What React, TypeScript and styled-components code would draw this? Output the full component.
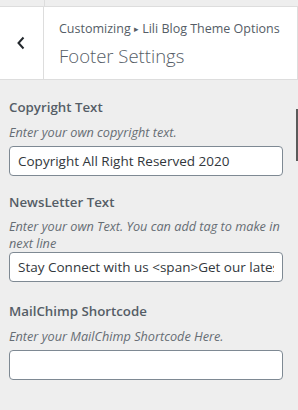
import React from "react";
import styled, { createGlobalStyle } from "styled-components";

const GlobalStyle = createGlobalStyle`
  html, body {
    margin: 0;
    padding: 0;
    background: #eeeeee;
  }
  body {
    font-family: "Open Sans", "Noto Sans", sans-serif;
    color: #555d66;
    overflow: hidden;
  }
`;

interface FieldData {
  label: string;
  description: string;
  value: string;
  top: number; // space above the field
  descTop: number; // space between label and description
  inputTop: number; // space between description and input
}

const fields: FieldData[] = [
  {
    label: "Copyright Text",
    description: "Enter your own copyright text.",
    value: "Copyright All Right Reserved 2020",
    top: 0,
    descTop: 7,
    inputTop: 5,
  },
  {
    label: "NewsLetter Text",
    description: "Enter your own Text. You can add tag to make in next line",
    value: "Stay Connect with us <span>Get our latest news</span>",
    top: 16,
    descTop: 6,
    inputTop: 0,
  },
  {
    label: "MailChimp Shortcode",
    description: "Enter your MailChimp Shortcode Here.",
    value: "",
    top: 19,
    descTop: 7,
    inputTop: 5,
  },
];

const Field = ({ label, description, value, top, descTop, inputTop }: FieldData) => (
  <FieldWrap $top={top}>
    <Label>{label}</Label>
    <Description $top={descTop} $bottom={inputTop}>
      {description}
    </Description>
    <Input type="text" defaultValue={value} />
  </FieldWrap>
);

const App = () => {
  return (
    <Panel>
      <GlobalStyle />
      <TopStrip>
        <StripCell />
      </TopStrip>
      <Header>
        <BackButton>
          <svg width="10" height="14" viewBox="0 0 10 14">
            <path d="M7.5 1.5 L2.5 7 L7.5 12.5" fill="none" stroke="#23282d" strokeWidth="2" />
          </svg>
        </BackButton>
        <Titles>
          <Crumb>
            Customizing <Arrow>▸</Arrow> Lili Blog Theme Options
          </Crumb>
          <Title>Footer Settings</Title>
        </Titles>
      </Header>
      <Body>
        {fields.map((f) => (
          <Field key={f.label} {...f} />
        ))}
      </Body>
      <Scrollbar />
    </Panel>
  );
};

export default App;

const Panel = styled.div`
  position: relative;
  width: 298px;
  height: 410px;
  background: #eeeeee;
  overflow: hidden;
`;

const TopStrip = styled.div`
  height: 6px;
  display: flex;
  border-bottom: 1px solid #dddddd;
`;

const StripCell = styled.div`
  width: 44px;
  border-right: 1px solid #dddddd;
`;

const Header = styled.div`
  display: flex;
  height: 72px;
  background: #ffffff;
  border-bottom: 1px solid #dddddd;
  border-right: 1px solid #dddddd;
`;

const BackButton = styled.div`
  width: 44px;
  flex-shrink: 0;
  border-right: 1px solid #dddddd;
  display: flex;
  align-items: center;
  justify-content: center;
  padding-right: 2px;
  box-sizing: border-box;
`;

const Titles = styled.div`
  display: flex;
  flex-direction: column;
  padding: 13px 0 0 15px;
  white-space: nowrap;
`;

const Crumb = styled.div`
  font-size: 12.5px;
  line-height: 18px;
  color: #555d66;
`;

const Arrow = styled.span`
  font-size: 9px;
  vertical-align: 1px;
`;

const Title = styled.div`
  margin-top: 4px;
  font-size: 18.5px;
  font-weight: 300;
  line-height: 28px;
  color: #555d66;
`;

const Body = styled.div`
  padding: 17px 14px 0 9px;
  display: flex;
  flex-direction: column;
`;

const FieldWrap = styled.div<{ $top: number }>`
  display: flex;
  flex-direction: column;
  margin-top: ${(p) => p.$top}px;
`;

const Label = styled.div`
  font-size: 13.3px;
  font-weight: 600;
  line-height: 20px;
  color: #555d66;
`;

const Description = styled.div<{ $top: number; $bottom: number }>`
  font-size: 12.7px;
  font-style: italic;
  line-height: 17px;
  color: #666d74;
  margin: ${(p) => p.$top}px 0 ${(p) => p.$bottom}px;
`;

const Input = styled.input`
  box-sizing: border-box;
  width: 274px;
  height: 30px;
  padding: 0 8px;
  border: 1px solid #7e8993;
  border-radius: 4px;
  background: #ffffff;
  font-family: "Open Sans", "Noto Sans", sans-serif;
  font-size: 13.5px;
  color: #32373c;
  outline: none;
`;

const Scrollbar = styled.div`
  position: absolute;
  right: 0;
  top: 109px;
  width: 2px;
  height: 52px;
  background: #5a5a5a;
`;
